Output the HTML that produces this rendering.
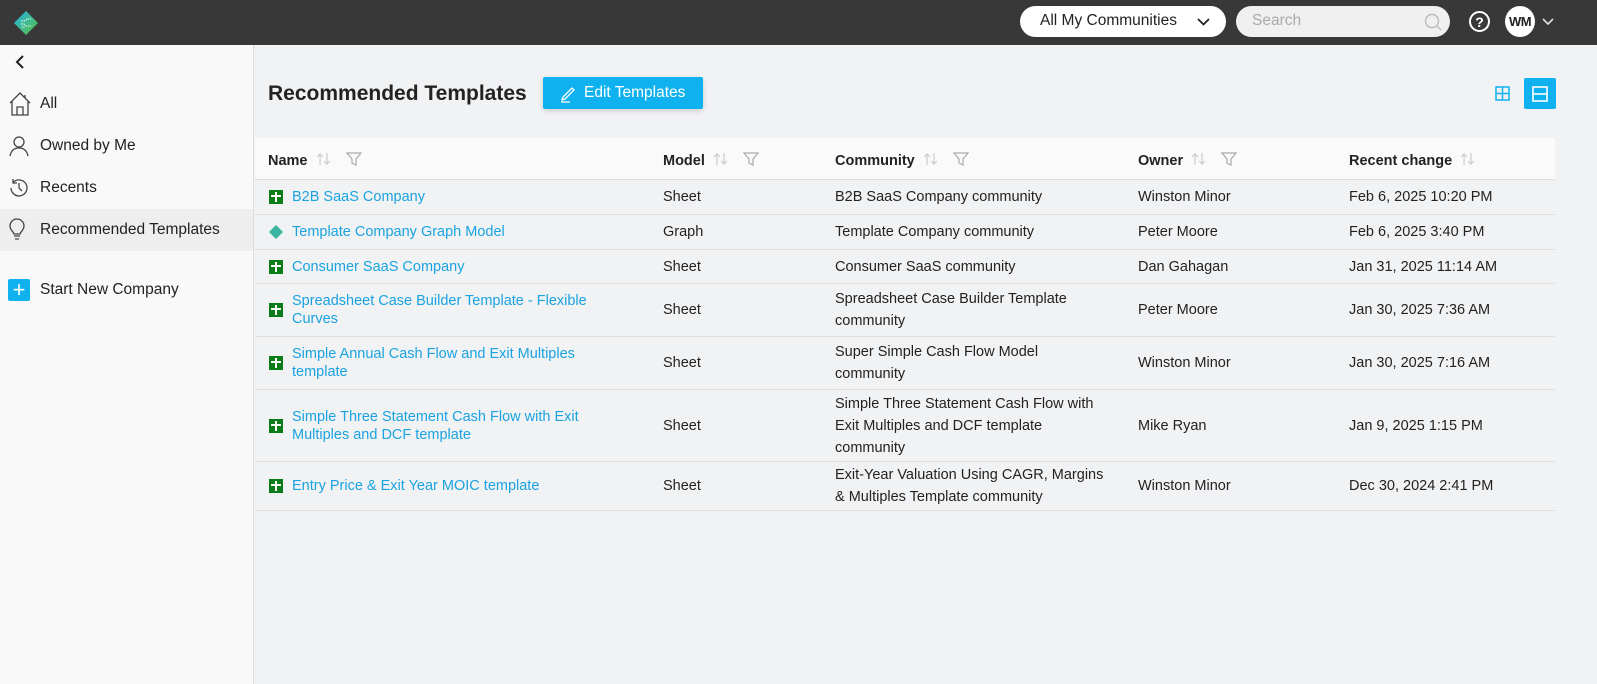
<!DOCTYPE html>
<html><head><meta charset="utf-8"><style>
*{box-sizing:border-box;margin:0;padding:0}
body{width:1597px;height:684px;overflow:hidden;font-family:"Liberation Sans",sans-serif;background:#f1f2f4;position:relative;color:#222}
.top{position:absolute;left:0;top:0;width:1597px;height:45px;background:#383838}
.side{position:absolute;left:0;top:45px;width:254px;height:639px;background:#f9f9f9;border-right:1px solid #ddd}
.nav{position:absolute;left:0;width:253px;height:42px;display:flex;align-items:center;padding-left:40px;font-size:15.5px;color:#222}
.nav svg{position:absolute;left:8px}
.main{position:absolute;left:255px;top:45px;right:0;bottom:0}
.th{position:absolute;left:0;top:93px;width:1300px;height:42px;background:#fafafa;border-bottom:1px solid #ddd}
.h{position:absolute;top:13px;font-weight:bold;font-size:14.5px;white-space:nowrap}
.h svg{vertical-align:-2px;margin-left:8px}
.row{position:absolute;left:0;width:1300px;border-bottom:1px solid #ddd;font-size:14.5px}
.c{position:absolute;top:50%;transform:translateY(-50%);line-height:22px}
.n{left:37px;color:#1aa3e0;line-height:18px;width:330px}
.m{left:408px}.cm{left:580px;width:282px}.o{left:883px}.r{left:1094px}
.ic{position:absolute;left:14px;top:50%;margin-top:-7px;width:14px;height:14px}
</style></head><body>
<div class="top">
<svg style="position:absolute;left:13px;top:10px" width="26" height="26" viewBox="0 0 26 26"><defs><linearGradient id="g" x1="0" y1="0" x2="1" y2="1"><stop offset="0" stop-color="#21b5e8"/><stop offset="1" stop-color="#5bbf3d"/></linearGradient></defs><path d="M13 1L25 13 13 25 1 13z" fill="url(#g)"/><path d="M8 11h4l2-2h4M8 14h3l2 2h5M9 17h3" stroke="#fff" stroke-width="1" fill="none" stroke-dasharray="1.5 1"/></svg>
<div style="position:absolute;left:1020px;top:6px;width:206px;height:31px;background:#fff;border-radius:16px;font-size:15.5px;padding:6px 0 0 20px">All My Communities<svg style="position:absolute;left:177px;top:12px" width="13" height="8"><path d="M1 1l5.5 5.5L12 1" stroke="#222" stroke-width="1.8" fill="none"/></svg></div>
<div style="position:absolute;left:1236px;top:6px;width:214px;height:31px;background:#f0f0f0;border-radius:16px;font-size:15.5px;color:#aaa;padding:6px 0 0 16px">Search<svg style="position:absolute;left:188px;top:7px" width="18" height="18"><circle cx="8" cy="8" r="6.5" stroke="#bbb" stroke-width="1.4" fill="none"/><path d="M12.5 12.5l4.5 4.5" stroke="#bbb" stroke-width="1.4"/></svg></div>
<div style="position:absolute;left:1469px;top:11px;width:21px;height:21px;border:2px solid #fff;border-radius:50%;color:#fff;font-weight:bold;font-size:14px;text-align:center;line-height:18px">?</div>
<div style="position:absolute;left:1505px;top:6px;width:30px;height:31px;background:#fff;border-radius:50%;font-weight:bold;font-size:13px;text-align:center;line-height:31px;letter-spacing:-.5px">WM</div>
<svg style="position:absolute;left:1542px;top:18px" width="12" height="8"><path d="M1 1l5 5 5-5" stroke="#ddd" stroke-width="1.6" fill="none"/></svg>
</div>
<div class="side">
<svg style="position:absolute;left:15px;top:10px" width="10" height="14"><path d="M8 1L2 7l6 6" stroke="#222" stroke-width="2" fill="none"/></svg>
<div class="nav" style="top:38px">All<svg width="24" height="26" viewBox="0 0 24 26"><path d="M2 12L12 2l10 10M4 10v14h16V10M9 24v-8h6v8M17 4v3" stroke="#444" stroke-width="1.3" fill="none"/></svg></div>
<div class="nav" style="top:80px">Owned by Me<svg width="22" height="22"><circle cx="11" cy="7" r="5" stroke="#444" stroke-width="1.3" fill="none"/><path d="M2 21c1-5 4-8 9-8s8 3 9 8" stroke="#444" stroke-width="1.3" fill="none"/></svg></div>
<div class="nav" style="top:122px">Recents<svg width="22" height="22"><path d="M3 11a8 8 0 1 0 2.3-5.7M5 2v4h4M11 6v5l3 3" stroke="#444" stroke-width="1.3" fill="none"/></svg></div>
<div class="nav" style="top:164px;background:#eeeeee">Recommended Templates<svg width="20" height="24"><path d="M6 16c-1-3-4-4-4-8a7 7 0 0 1 14 0c0 4-3 5-4 8zM6 18h6M7 21h4" stroke="#444" stroke-width="1.3" fill="none"/></svg></div>
<div class="nav" style="top:224px">Start New Company<div style="position:absolute;left:8px;top:10px;width:22px;height:22px;background:#0fb2ee;border-radius:2px;color:#fff;font-size:22px;line-height:21px;text-align:center">+</div></div>
</div>
<div class="main">
<div style="position:absolute;left:13px;top:37px;font-weight:bold;font-size:21px">Recommended Templates</div>
<div style="position:absolute;left:288px;top:32px;width:160px;height:32px;background:#0fb2ee;border-radius:2px;color:#fff;font-size:15.5px;padding:7px 0 0 41px;box-shadow:0 2px 6px rgba(0,0,0,.15)">Edit Templates<svg style="position:absolute;left:16px;top:6px" width="20" height="20"><path d="M4 14l9-9 2 2-9 9-3 1z M2 19h9" stroke="#fff" stroke-width="1.3" fill="none"/></svg></div>
<svg style="position:absolute;left:1240px;top:41px" width="15" height="15"><rect x="1" y="1" width="13" height="13" stroke="#0fb2ee" stroke-width="1.5" fill="none"/><path d="M7.5 1v13M1 7.5h13" stroke="#0fb2ee" stroke-width="1.5"/></svg>
<div style="position:absolute;left:1269px;top:33px;width:32px;height:31px;background:#0fb2ee;border-radius:2px"><svg style="position:absolute;left:8px;top:8px" width="16" height="16"><rect x="1" y="1" width="14" height="14" stroke="#fff" stroke-width="1.6" fill="none"/><path d="M1 8h14" stroke="#fff" stroke-width="1.6"/></svg></div>
<div class="th">
<div class="h" style="left:13px">Name<svg width="50" height="16"><path d="M4 14V3M1 6l3-3 3 3M11 2v11M8 10l3 3 3-3" stroke="#ccc" stroke-width="1.2" fill="none"/><path d="M31 2h14l-5 6v6l-4-2V8z" stroke="#aaa" stroke-width="1.2" fill="none"/></svg></div>
<div class="h" style="left:408px">Model<svg width="50" height="16"><path d="M4 14V3M1 6l3-3 3 3M11 2v11M8 10l3 3 3-3" stroke="#ccc" stroke-width="1.2" fill="none"/><path d="M31 2h14l-5 6v6l-4-2V8z" stroke="#aaa" stroke-width="1.2" fill="none"/></svg></div>
<div class="h" style="left:580px">Community<svg width="50" height="16"><path d="M4 14V3M1 6l3-3 3 3M11 2v11M8 10l3 3 3-3" stroke="#ccc" stroke-width="1.2" fill="none"/><path d="M31 2h14l-5 6v6l-4-2V8z" stroke="#aaa" stroke-width="1.2" fill="none"/></svg></div>
<div class="h" style="left:883px">Owner<svg width="50" height="16"><path d="M4 14V3M1 6l3-3 3 3M11 2v11M8 10l3 3 3-3" stroke="#ccc" stroke-width="1.2" fill="none"/><path d="M31 2h14l-5 6v6l-4-2V8z" stroke="#aaa" stroke-width="1.2" fill="none"/></svg></div>
<div class="h" style="left:1094px">Recent change<svg width="20" height="16"><path d="M4 14V3M1 6l3-3 3 3M11 2v11M8 10l3 3 3-3" stroke="#ccc" stroke-width="1.2" fill="none"/></svg></div>
</div>
<div class="row" style="top:135px;height:35px"><i class="ic" style="background:#0a7d1a"></i><span class="c n">B2B SaaS Company</span><span class="c m">Sheet</span><span class="c cm">B2B SaaS Company community</span><span class="c o">Winston Minor</span><span class="c r">Feb 6, 2025 10:20 PM</span></div>
<div class="row" style="top:170px;height:35px"><svg class="ic" viewBox="0 0 14 14"><path d="M7 0l7 7-7 7-7-7z" fill="#3cb4a0"/></svg><span class="c n">Template Company Graph Model</span><span class="c m">Graph</span><span class="c cm">Template Company community</span><span class="c o">Peter Moore</span><span class="c r">Feb 6, 2025 3:40 PM</span></div>
<div class="row" style="top:205px;height:34px"><i class="ic" style="background:#0a7d1a"></i><span class="c n">Consumer SaaS Company</span><span class="c m">Sheet</span><span class="c cm">Consumer SaaS community</span><span class="c o">Dan Gahagan</span><span class="c r">Jan 31, 2025 11:14 AM</span></div>
<div class="row" style="top:239px;height:53px"><i class="ic" style="background:#0a7d1a"></i><span class="c n">Spreadsheet Case Builder Template - Flexible Curves</span><span class="c m">Sheet</span><span class="c cm">Spreadsheet Case Builder Template community</span><span class="c o">Peter Moore</span><span class="c r">Jan 30, 2025 7:36 AM</span></div>
<div class="row" style="top:292px;height:53px"><i class="ic" style="background:#0a7d1a"></i><span class="c n">Simple Annual Cash Flow and Exit Multiples template</span><span class="c m">Sheet</span><span class="c cm">Super Simple Cash Flow Model<br>community</span><span class="c o">Winston Minor</span><span class="c r">Jan 30, 2025 7:16 AM</span></div>
<div class="row" style="top:345px;height:72px"><i class="ic" style="background:#0a7d1a"></i><span class="c n">Simple Three Statement Cash Flow with Exit Multiples and DCF template</span><span class="c m">Sheet</span><span class="c cm">Simple Three Statement Cash Flow with<br>Exit Multiples and DCF template<br>community</span><span class="c o">Mike Ryan</span><span class="c r">Jan 9, 2025 1:15 PM</span></div>
<div class="row" style="top:417px;height:49px"><i class="ic" style="background:#0a7d1a"></i><span class="c n">Entry Price &amp; Exit Year MOIC template</span><span class="c m">Sheet</span><span class="c cm">Exit-Year Valuation Using CAGR, Margins<br>&amp; Multiples Template community</span><span class="c o">Winston Minor</span><span class="c r">Dec 30, 2024 2:41 PM</span></div>
</div>
<style>.ic:not(svg)::before{content:"";position:absolute;left:6px;top:2px;width:2px;height:10px;background:#fff}.ic:not(svg)::after{content:"";position:absolute;left:2px;top:5px;width:10px;height:2px;background:#fff}</style>
</body></html>
